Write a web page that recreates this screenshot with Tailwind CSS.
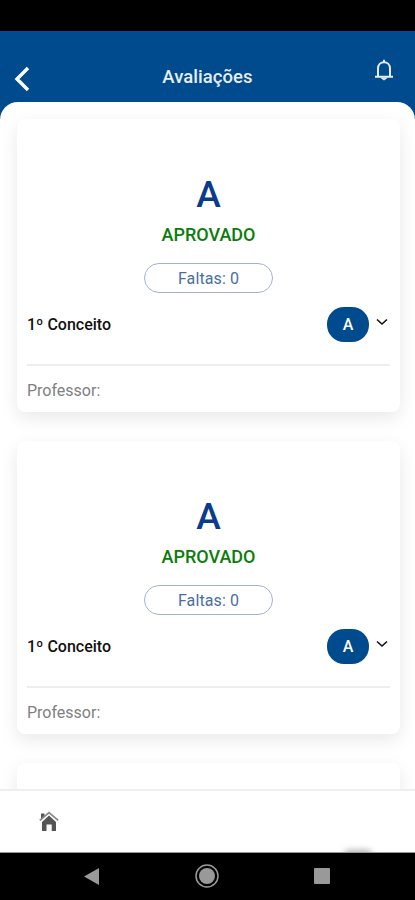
<!DOCTYPE html>
<html lang="pt-BR">
<head>
<meta charset="utf-8">
<title>Avaliações</title>
<meta name="viewport" content="width=device-width, initial-scale=1.0">
<script src="https://cdn.jsdelivr.net/npm/@tailwindcss/browser@4"></script>
<script>
const grades = [
  { grade: "A", status: "APROVADO", absences: 0, term: "1º Conceito", teacher: "" },
  { grade: "A", status: "APROVADO", absences: 0, term: "1º Conceito", teacher: "" },
];

addEventListener("DOMContentLoaded", () => {
    const list = document.getElementById("grades");
    for (const item of grades) {
        const card = document.createElement("li");
        card.className = "flex flex-col items-center h-[293px] shrink-0 rounded-lg bg-white px-[10px] pt-[56px] shadow-[0_6px_18px_rgba(0,0,0,0.09)]";
        card.innerHTML = `
            <div class="text-[37px] leading-[40px] font-medium text-[#0b3b8c]">${item.grade}</div>
            <div class="mt-[9px] text-[18px] leading-[22px] font-medium text-[#0a7d0a]">${item.status}</div>
            <div class="mt-[17px] flex h-[30px] w-[129px] items-center justify-center rounded-full border border-[#a3b1cb] pt-px text-[16px] tracking-[0.1px] text-[#4a6da3]">Faltas: ${item.absences}</div>
            <div class="mt-[14px] flex h-[35px] w-full items-center">
                <span class="text-[16px] font-medium text-[#111]">${item.term}</span>
                <span class="ml-auto flex h-[35px] w-[42px] items-center justify-center rounded-[17px] bg-[#004b8d] text-[16px] font-medium text-white">${item.grade}</span>
                <svg class="mt-[-6px] mr-[2px] ml-[7px] h-[8px] w-[12px]" viewBox="0 0 12 8" fill="none" stroke="#111" stroke-width="1.6"><path d="M1 1.5 6 6l5-4.5"/></svg>
            </div>
            <div class="mt-[22px] w-full border-t-2 border-[#eee] pt-[15px] text-[16px] leading-[20px] text-[#808080]">Professor: ${item.teacher}</div>
        `;
        list.appendChild(card);
    }

    const nextCard = document.createElement("li");
    nextCard.className = "h-[60px] shrink-0 rounded-t-lg bg-white shadow-[0_6px_18px_rgba(0,0,0,0.09)]";
    list.appendChild(nextCard);
});
</script>
</head>
<body class="flex h-[900px] w-[415px] flex-col overflow-hidden bg-black font-[Roboto,sans-serif]">
<div class="h-[31px] shrink-0 bg-black"></div>

<div class="flex min-h-0 flex-1 flex-col bg-[#004b8d]">
    <header class="grid h-[71px] shrink-0 grid-cols-[1fr_auto_1fr] items-center px-[14px] pt-[21px]">
        <svg class="mt-[4px] h-[26px] w-[16px]" viewBox="0 0 16 26" fill="none" stroke="#fff" stroke-width="3.4"><path d="M14 2 3 13l11 11"/></svg>
        <h1 class="mt-[2px] text-[18.5px] font-medium tracking-[0.05px] text-[#e6edf5]">Avaliações</h1>
        <svg class="mt-[-14px] mr-[7px] h-[22px] w-[20px] justify-self-end" viewBox="0 0 20 22" fill="none" stroke="#e3ebf4" stroke-width="2"><path d="M1 17.800h18M4 17.500V9.500C4 5.800 6.600 3.200 10 3.200s6 2.600 6 6.300v8M10 3V.8"/><path d="M8.300 19.200h3.400L10 20.500z" stroke-width="1.600"/></svg>
    </header>

    <main class="min-h-0 flex-1 overflow-hidden rounded-t-[18px] bg-white">
        <ul class="flex flex-col gap-[29px] pt-[17px] pr-[15px] pl-[17px]" id="grades"></ul>
    </main>
</div>

<nav class="relative flex h-[64px] shrink-0 items-center overflow-hidden border-t-2 border-b border-t-[#eee] border-b-[#999] bg-white pl-[39px]">
    <svg class="h-[21px] w-[20px]" viewBox="0 0 20 21" fill="#555"><path d="M3 11 10 4.500l7 6.500V20h-4.300v-6.500H7.500V20H3z"/><path d="M2 2.500h3.500V6L2 9z"/><path d="M.8 9.300 10 1.500l9.200 7.800" fill="none" stroke="#888" stroke-width="1.700"/></svg>
    <!-- shadow of the floating button below the bar -->
    <span class="absolute bottom-[-8px] left-[344px] h-[10px] w-[28px] rounded-full bg-black/30 blur-[3px]"></span>
</nav>

<div class="flex h-[47px] shrink-0 items-center justify-between pr-[85px] pb-px pl-[84px]">
    <svg class="h-[17px] w-[15px]" viewBox="0 0 15 17" fill="#999"><path d="M0 8.500 15 0v17z"/></svg>
    <svg class="h-[24px] w-[24px]" viewBox="0 0 24 24"><circle cx="12" cy="12" r="11" fill="none" stroke="#999" stroke-width="1.500"/><circle cx="12" cy="12" r="8" fill="#999"/></svg>
    <span class="h-[16px] w-[16px] rounded-[1px] bg-[#999]"></span>
</div>
</body>
</html>
